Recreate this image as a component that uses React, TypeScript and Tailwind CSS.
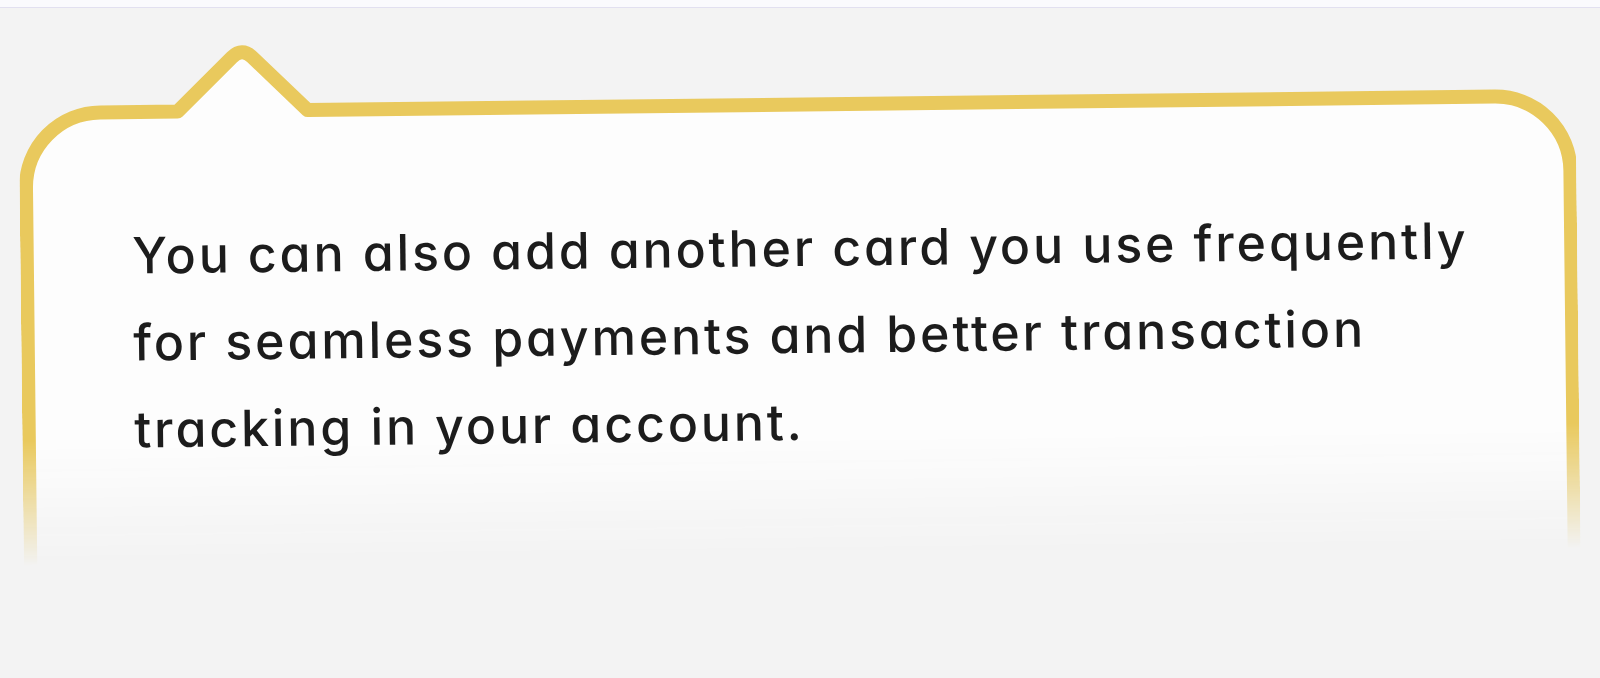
import React from "react";

export default function App() {
  return (
    <div className="h-[678px] w-full overflow-hidden bg-[#f3f3f3] font-['Inter',_'Noto_Sans',_sans-serif]">
      <div className="h-[8px] border-b border-[#e2e0f0] bg-[#fafafd]" />
      <div className="relative ml-[21px] mt-[24px] h-[570px] w-[1557px] rotate-[-0.65deg]">
        <svg
          className="absolute inset-0 [mask-image:linear-gradient(to_bottom,black_400px,transparent_525px)]"
          width="1557"
          height="570"
          viewBox="0 0 1557 570"
          fill="none"
        >
          <path
            d="M6.5 570 V147.5 A75 75 0 0 1 81.5 72.5 H159 L214 18.8 Q224 9 234 18.8 L289 72.5 H1476 A75 75 0 0 1 1551 147.5 V570"
            fill="#fdfdfd"
            stroke="#e9c95d"
            strokeWidth="14"
            strokeLinejoin="round"
          />
        </svg>
        <div className="relative pl-[112px] pt-[173px] text-[50px] font-medium leading-[87px] tracking-[2.9px] text-[#1c1c1c] [font-feature-settings:'cv11'] whitespace-nowrap">
          <div>You can also add another card you use frequently</div>
          <div>for seamless payments and better transaction</div>
          <div>tracking in your account.</div>
        </div>
      </div>
    </div>
  );
}
